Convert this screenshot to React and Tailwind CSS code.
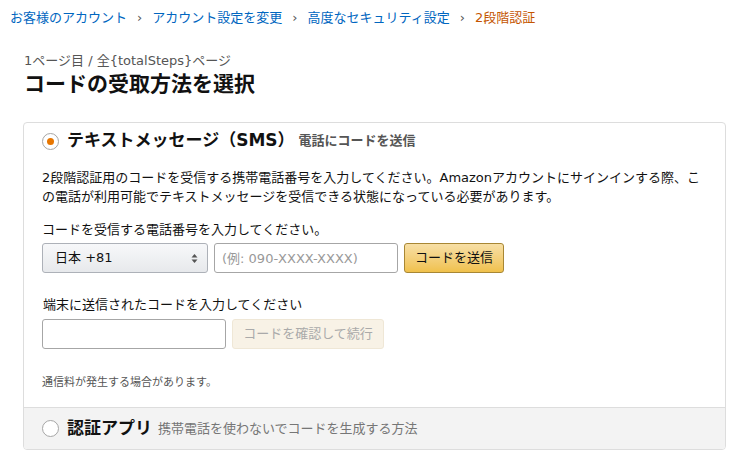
import React from "react";

const font = {
  fontFamily: '"DejaVu Sans", "Noto Sans CJK JP", sans-serif',
};

function Radio({ checked }) {
  return (
    <span className="flex h-[17px] w-[17px] shrink-0 items-center justify-center rounded-full border border-[#a6a6a6] bg-white">
      {checked && <span className="h-[7px] w-[7px] rounded-full bg-[#e77600]" />}
    </span>
  );
}

function Crumb({ children, last }) {
  return (
    <span className={last ? "text-[#c45500]" : "text-[#0066c0]"}>{children}</span>
  );
}

function Sep() {
  return <span className="mx-[10px] text-[#555]">›</span>;
}

export default function App() {
  return (
    <div className="min-h-screen bg-white text-[#111]" style={font}>
      {/* Breadcrumb */}
      <div className="flex h-[36px] items-center px-[10px] text-[13px]">
        <Crumb>お客様のアカウント</Crumb>
        <Sep />
        <Crumb>アカウント設定を変更</Crumb>
        <Sep />
        <Crumb>高度なセキュリティ設定</Crumb>
        <Sep />
        <Crumb last>2段階認証</Crumb>
      </div>

      <div className="pl-[23px] pr-[26px]">
        <div className="mt-[16px] px-[1px] text-[13px] leading-[18px] text-[#555]">
          1ページ目 / 全{"{totalSteps}"}ページ
        </div>
        <h1 className="mt-[1px] px-[1px] text-[21px] font-bold leading-[26px]">
          コードの受取方法を選択
        </h1>

        {/* Card */}
        <div className="mt-[25px] overflow-hidden rounded-[4px] border border-[#ddd]">
          <div className="px-[18px] pb-[16px] pt-[7px]">
            <div className="flex h-[22px] items-center">
              <Radio checked />
              <span className="ml-[8px] text-[17px] font-bold">
                テキストメッセージ（SMS）
              </span>
              <span className="ml-[4px] text-[13px] font-bold text-[#555]">
                電話にコードを送信
              </span>
            </div>

            <p className="mt-[16px] text-[13px] leading-[19px]">
              2段階認証用のコードを受信する携帯電話番号を入力してください。Amazonアカウントにサインインする際、この電話が利用可能でテキストメッセージを受信できる状態になっている必要があります。
            </p>

            <div className="mt-[14px] text-[13px] leading-[19px]">
              コードを受信する電話番号を入力してください。
            </div>
            <div className="mt-[4px] flex gap-[6px]">
              <div className="flex h-[30px] w-[166px] items-center justify-between rounded-[3px] border border-[#adb1b8] bg-gradient-to-b from-[#f7f8fa] to-[#e7e9ec] pl-[12px] pr-[9px] text-[13px]">
                <span>日本 +81</span>
                <svg width="7" height="11" viewBox="0 0 7 11" fill="#555">
                  <path d="M3.5 1 L6.5 4.5 H0.5 Z" />
                  <path d="M3.5 10 L6.5 6.5 H0.5 Z" />
                </svg>
              </div>
              <input
                className="h-[30px] w-[184px] rounded-[3px] border border-[#a6a6a6] px-[7px] text-[13px] outline-none placeholder:text-[#999]"
                placeholder="(例: 090-XXXX-XXXX)"
              />
              <button className="h-[30px] w-[100px] rounded-[3px] border border-[#a88734] bg-gradient-to-b from-[#f7dfa5] to-[#f0c14b] text-[13px] text-[#111]">
                コードを送信
              </button>
            </div>

            <div className="mt-[22px] px-[1px] text-[13px] leading-[19px]">
              端末に送信されたコードを入力してください
            </div>
            <div className="mt-[5px] flex gap-[6px]">
              <input className="h-[30px] w-[184px] rounded-[3px] border border-[#a6a6a6] px-[7px] text-[13px] outline-none" />
              <button className="h-[30px] w-[152px] rounded-[3px] border border-[#efe7d6] bg-[#f8f2e6] text-[13px] text-[#aaa]">
                コードを確認して続行
              </button>
            </div>

            <div className="mt-[26px] text-[11px] leading-[16px] text-[#555]">
              通信料が発生する場合があります。
            </div>
          </div>

          <div className="flex h-[42px] items-center border-t border-[#ddd] bg-[#f3f3f3] px-[18px]">
            <Radio />
            <span className="ml-[8px] text-[17px] font-bold">認証アプリ</span>
            <span className="ml-[6px] text-[13px] text-[#767676]">
              携帯電話を使わないでコードを生成する方法
            </span>
          </div>
        </div>
      </div>
    </div>
  );
}
